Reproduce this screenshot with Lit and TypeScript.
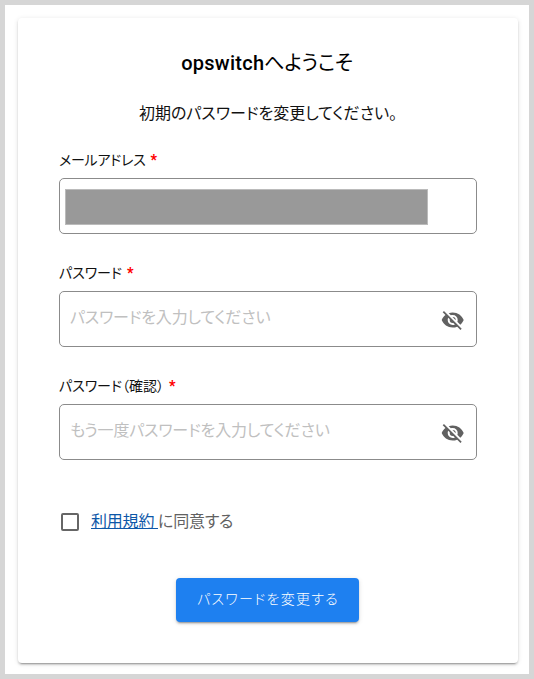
import { LitElement, html, css } from "lit";
import { customElement, property } from "lit/decorators.js";

const fontStack = css`Roboto, "Noto Sans CJK JP", sans-serif`;

@customElement("form-field")
class FormField extends LitElement {
  @property() label = "";
  @property() hint = "";
  @property({ type: Boolean }) masked = false;

  static styles = css`
    :host { display: block; height: 113px; }
    .label { height: 29px; font-size: 14px; line-height: 22px; color: #111; white-space: pre; }
    .masked-label { letter-spacing: -.25px; }
    .required { color: #f00; font-weight: 900; margin-left: 5px; }
    .box {
      box-sizing: border-box; height: 56px; border: 1px solid #8b8b8b; border-radius: 5px;
      display: flex; align-items: center; justify-content: space-between; padding: 0 11px 0 10px;
    }
    .box.masked { padding-left: 5px; }
    .hint { font-size: 16px; line-height: 24px; color: #c0c0c0; white-space: nowrap;
      margin-bottom: 2px; letter-spacing: -.17px; }
    .mask { box-sizing: border-box; width: 363px; height: 36px; background: #999; border: 1px solid #bbb; margin-top: 2px; }
    .eye { width: 24px; height: 24px; fill: #616161; display: block; margin-top: 1px; }
  `;

  render() {
    return html`
      <div class="label"><span class="${this.masked ? "masked-label" : ""}">${this.label}</span><span class="required">*</span></div>
      <div class="box ${this.masked ? "masked" : ""}">
        ${this.masked
          ? html`<div class="mask"></div>`
          : html`<span class="hint">${this.hint}</span>
              <svg class="eye" viewBox="0.3 0 24 24">
                <path d="M11.83,9L15,12.16C15,12.11 15,12.05 15,12A3,3 0 0,0 12,9C11.94,9 11.89,9 11.83,9M7.53,9.8L9.08,11.35C9.03,11.56 9,11.77 9,12A3,3 0 0,0 12,15C12.22,15 12.44,14.97 12.65,14.92L14.2,16.47C13.53,16.8 12.79,17 12,17A5,5 0 0,1 7,12C7,11.21 7.2,10.47 7.53,9.8M2,4.27L4.28,6.55L4.73,7C3.08,8.3 1.78,10 1,12C2.73,16.39 7,19.5 12,19.5C13.55,19.5 15.03,19.2 16.38,18.66L16.81,19.08L19.73,22L21,20.73L3.27,3M12,7A5,5 0 0,1 17,12C17,12.64 16.87,13.26 16.64,13.82L19.57,16.75C21.07,15.5 22.27,13.86 23,12C21.27,7.61 17,4.5 12,4.5C10.6,4.5 9.26,4.75 8,5.2L10.17,7.35C10.74,7.13 11.35,7 12,7Z"></path>
              </svg>`}
      </div>
    `;
  }
}

@customElement("app-root")
class AppRoot extends LitElement {
  static styles = css`
    :host {
      display: block; box-sizing: border-box; width: 534px; height: 679px; padding: 13px 11px 12px 13px;
      border: 5px solid #d6d6d6; background: #fff; color: #111;
      font-family: ${fontStack}; font-feature-settings: "palt";
    }
    .card {
      box-sizing: border-box; width: 500px; height: 645px; padding: 29px 41px 0; border-radius: 4px; background: #fff;
      box-shadow: 0 3px 1px -2px rgba(0,0,0,.2), 0 2px 2px 0 rgba(0,0,0,.14), 0 1px 5px 0 rgba(0,0,0,.12);
    }
    .title { margin: 0; padding-right: 2px; text-align: center; font-size: 20px; line-height: 32px; font-weight: 500; letter-spacing: .25px; color: #000; }
    .kana { font-weight: 400; letter-spacing: -.25px; }
    .lead { margin: 23px 0 0; text-align: center; font-size: 16px; line-height: 24px; }
    .fields { margin-top: 23px; }
    .terms { display: flex; align-items: center; height: 24px; margin-top: 20px; font-size: 16px; color: #616161; white-space: pre; letter-spacing: -.2px; }
    .check { box-sizing: border-box; width: 18px; height: 18px; margin: 4px 12px 0 2px; border: 2px solid #666; border-radius: 2px; }
    .link { color: #0d57a8; text-decoration: underline; }
    .submit {
      display: block; width: 183px; height: 44px; margin: 46px auto 0 117px; padding: 0 0 5px 1px; border: 0; border-radius: 4px;
      background: #1e80f0; color: #fff; font: 300 14px ${fontStack}; font-feature-settings: "palt"; letter-spacing: 1.25px;
      box-shadow: 0 3px 1px -2px rgba(0,0,0,.2), 0 2px 2px 0 rgba(0,0,0,.14), 0 1px 5px 0 rgba(0,0,0,.12);
    }
  `;

  render() {
    return html`
      <main class="card">
        <h1 class="title">opswitch<span class="kana">へようこそ</span></h1>
        <p class="lead">初期のパスワードを変更してください。</p>
        <div class="fields">
          <form-field label="メールアドレス" masked></form-field>
          <form-field label="パスワード" hint="パスワードを入力してください"></form-field>
          <form-field label="パスワード（確認）" hint="もう一度パスワードを入力してください"></form-field>
        </div>
        <div class="terms"><span class="check"></span><span><span class="link">利用規約 </span>に同意する</span></div>
        <button class="submit">パスワードを変更する</button>
      </main>
    `;
  }
}
